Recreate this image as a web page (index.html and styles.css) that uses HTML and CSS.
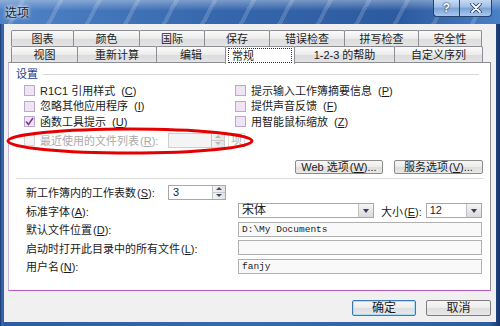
FILE: index.html
```html
<!DOCTYPE html>
<html lang="zh-CN">
<head>
    <meta charset="UTF-8">
    <title>选项</title>
    <link rel="stylesheet" href="styles.css">
</head>
<body>
    <div class="window">
        <div class="titlebar">
            <span class="title">选项</span>
            <div class="caption-buttons">
                <span class="cap-btn help">?</span>
                <span class="cap-btn close">
                    <svg width="12" height="10" viewBox="0 0 12 10"><path d="M2 1 L10 9 M10 1 L2 9" stroke="#1d3558" stroke-width="3.4" stroke-linecap="round"/><path d="M2 1 L10 9 M10 1 L2 9" stroke="#fff" stroke-width="1.8" stroke-linecap="round"/></svg>
                </span>
            </div>
        </div>

        <div class="client">
            <div class="tabs">
                <div class="tab-row back">
                    <div class="tab w63">图表</div>
                    <div class="tab w67">颜色</div>
                    <div class="tab w66">国际</div>
                    <div class="tab w66">保存</div>
                    <div class="tab w76">错误检查</div>
                    <div class="tab w75">拼写检查</div>
                    <div class="tab w64">安全性</div>
                </div>
                <div class="tab-row front">
                    <div class="tab w67">视图</div>
                    <div class="tab w80">重新计算</div>
                    <div class="tab w70">编辑</div>
                    <div class="tab w70 selected"><span class="focus">常规</span></div>
                    <div class="tab w101">1-2-3 的帮助</div>
                    <div class="tab w89">自定义序列</div>
                </div>
            </div>

            <div class="panel">
                <div class="group-title"><span>设置</span><div class="rule"></div></div>

                <div class="options">
                    <label class="check"><span class="box"></span>R1C1 引用样式<span class="key">(<u>C</u>)</span></label>
                    <label class="check"><span class="box"></span>提示输入工作簿摘要信息<span class="key">(<u>P</u>)</span></label>
                    <label class="check"><span class="box"></span>忽略其他应用程序<span class="key">(<u>I</u>)</span></label>
                    <label class="check"><span class="box"></span>提供声音反馈<span class="key">(<u>F</u>)</span></label>
                    <label class="check"><span class="box checked">
                        <svg width="9" height="9" viewBox="0 0 9 9"><path d="M1 4.5 L3.5 7.5 L8 1" fill="none" stroke="#7a3a9a" stroke-width="1.6"/></svg>
                    </span>函数工具提示<span class="key">(<u>U</u>)</span></label>
                    <label class="check"><span class="box"></span>用智能鼠标缩放<span class="key">(<u>Z</u>)</span></label>
                </div>

                <div class="recent">
                    <span class="box disabled"></span>
                    <span class="recent-label">最近使用的文件列表<span class="key">(<u>R</u>):</span></span>
                    <div class="spin disabled">
                        <span class="value"></span>
                        <span class="arrows"><i class="up"></i><i class="down"></i></span>
                    </div>
                    <span class="unit">项</span>
                </div>

                <div class="panel-buttons">
                    <button class="btn">Web 选项<span class="key">(<u>W</u>)...</span></button>
                    <button class="btn">服务选项<span class="key">(<u>V</u>)...</span></button>
                </div>

                <div class="separator"></div>

                <div class="form">
                    <div class="form-row">
                        <span class="label short">新工作簿内的工作表数<span class="key">(<u>S</u>):</span></span>
                        <div class="spin">
                            <span class="value">3</span>
                            <span class="arrows"><i class="up"></i><i class="down"></i></span>
                        </div>
                    </div>
                    <div class="form-row">
                        <span class="label">标准字体<span class="key">(<u>A</u>):</span></span>
                        <div class="combo font">
                            <span class="value">宋体</span>
                            <span class="drop"></span>
                        </div>
                        <span class="size-label">大小<span class="key">(<u>E</u>):</span></span>
                        <div class="combo size">
                            <span class="value latin">12</span>
                            <span class="drop"></span>
                        </div>
                    </div>
                    <div class="form-row">
                        <span class="label">默认文件位置<span class="key">(<u>D</u>):</span></span>
                        <div class="input mono">D:\My Documents</div>
                    </div>
                    <div class="form-row">
                        <span class="label">启动时打开此目录中的所有文件<span class="key">(<u>L</u>):</span></span>
                        <div class="input mono"></div>
                    </div>
                    <div class="form-row">
                        <span class="label">用户名<span class="key">(<u>N</u>):</span></span>
                        <div class="input mono">fanjy</div>
                    </div>
                </div>

                <svg class="highlight" width="252" height="29" viewBox="0 0 252 29">
                    <ellipse cx="125" cy="14" rx="122" ry="12" fill="none" stroke="#e40000" stroke-width="3"/>
                </svg>
            </div>

            <div class="footer">
                <button class="btn big default">确定</button>
                <button class="btn big">取消</button>
            </div>
        </div>
    </div>
</body>
</html>
```

FILE: styles.css
```css
* {
    box-sizing: border-box;
}
body {
    margin: 0;
    width: 500px;
    height: 326px;
    overflow: hidden;
    font-family: "Liberation Sans", "Noto Sans CJK SC", sans-serif;
    font-size: 11px;
    color: #1b1b1b;
}
u {
    text-decoration: underline;
    text-underline-offset: 1px;
}
.key {
    font-family: "Liberation Sans", sans-serif;
    margin-left: 1px;
}

/* window frame */
.window {
    width: 500px;
    height: 326px;
    display: flex;
    flex-direction: column;
    background: linear-gradient(90deg, #17356a 0, #3a6bb0 2px, #2f5c9f 4px, #3a68ac 50%, #2f5c9f 98%, #17356a 100%);
}
.titlebar {
    height: 24px;
    flex: none;
    display: flex;
    justify-content: space-between;
    align-items: flex-start;
    padding-left: 5px;
    background:
        linear-gradient(rgba(255,255,255,0.35), rgba(255,255,255,0) 45%),
        repeating-linear-gradient(118deg, rgba(255,255,255,0) 0 18px, rgba(255,255,255,0.16) 18px 22px, rgba(255,255,255,0) 22px 34px),
        linear-gradient(90deg, #4f82c6, #3566ad 45%, #2c5aa0 80%, #4a80c6);
}
.title {
    font-size: 12px;
    line-height: 26px;
    color: #0f1e38;
    text-shadow: 0 0 3px #fff, 0 0 5px #fff;
}
.caption-buttons {
    display: flex;
    margin-right: 8px;
}
.cap-btn {
    height: 17px;
    display: flex;
    align-items: center;
    justify-content: center;
    border: 1px solid #24446f;
    border-top: none;
    background: linear-gradient(#c7dbf2, #9dbde4 45%, #7aa2d6 50%, #a9c8ec);
    color: #fff;
    font-weight: bold;
    font-size: 12px;
    text-shadow: 0 0 2px #1d3558, 0 0 1px #1d3558;
}
.cap-btn.help {
    width: 26px;
    border-right: none;
    border-radius: 0 0 0 4px;
}
.cap-btn.close {
    width: 33px;
    border-radius: 0 0 4px 0;
}

/* dialog client area */
.client {
    flex: 1;
    margin: 0 4px 4px;
    padding: 5px 5px 0 4px;
    background: #f0f0f0;
    display: flex;
    flex-direction: column;
}
.tabs {
    margin: 0 3px;
}
.tab-row {
    display: flex;
    height: 17px;
}
.tab {
    flex: none;
    display: flex;
    align-items: center;
    justify-content: center;
    height: 17px;
    border: 1px solid #8c8e94;
    border-bottom: none;
    border-radius: 2px 2px 0 0;
    margin-right: -1px;
    background: linear-gradient(#fbfbfb, #ebebeb 50%, #dcdcdc 51%, #e4e4e4);
    line-height: 14px;
}
.tab-row.back .tab {
    height: 16px;
}
.tab-row.back {
    align-items: flex-end;
}
.tab.selected {
    position: relative;
    z-index: 1;
    height: 18px;
    background: #fff;
    padding: 1px 2px 1px;
}
.tab .focus {
    flex: 1;
    align-self: stretch;
    display: flex;
    align-items: center;
    justify-content: flex-start;
    padding-left: 3px;
    border: 1px dotted #333;
}
.w63 { width: 63px; }
.w64 { width: 64px; }
.w66 { width: 66px; }
.w67 { width: 67px; }
.w70 { width: 70px; }
.w75 { width: 75px; }
.w76 { width: 76px; }
.w80 { width: 80px; }
.w89 { width: 89px; }
.w101 { width: 101px; }

/* tab page */
.panel {
    position: relative;
    flex: none;
    height: 229px;
    margin-top: -1px;
    background: #fff;
    border: 1px solid #8c8e94;
    border-left-color: #c8b6d4;
    border-bottom: 1px solid #b45ac2;
    padding: 0 7px 0 7px;
}
.group-title {
    display: flex;
    align-items: center;
    margin-top: 4px;
    height: 14px;
    line-height: 14px;
    color: #1f3b8a;
}
.group-title .rule {
    flex: 1;
    height: 1px;
    margin: 0 4px 0 5px;
    background: #d8d8d8;
}
.options {
    display: grid;
    grid-template-columns: 211px 1fr;
    grid-auto-rows: 15.5px;
    margin: 2px 0 0 8px;
}
.check {
    display: flex;
    align-items: center;
    gap: 5px;
    line-height: 14px;
}
.box {
    flex: none;
    width: 11px;
    height: 11px;
    display: flex;
    align-items: center;
    justify-content: center;
    border: 1px solid #bba9c9;
    background: #efe3f4;
}
.box.disabled {
    border-color: #d2d2d2;
    background: #f3f3f3;
}
.recent {
    display: flex;
    align-items: center;
    height: 15px;
    margin: 3px 0 0 8px;
    color: #a9a9a9;
}
.recent-label {
    margin-left: 5px;
    width: 128px;
}
.spin {
    display: flex;
    width: 58px;
    height: 15px;
    border: 1px solid #a8a8a8;
    background: #fff;
}
.spin.disabled {
    width: 57px;
    border-color: #cfcfcf;
    background: #f4f4f4;
}
.spin .value {
    flex: 1;
    padding-left: 4px;
    line-height: 13px;
}
.spin .arrows {
    width: 13px;
    display: flex;
    flex-direction: column;
    border-left: 1px solid #c4c4c4;
    background: linear-gradient(90deg, #f4f4f4, #e2e2e2);
}
.spin .arrows i {
    flex: 1;
    display: flex;
    align-items: center;
    justify-content: center;
}
.spin .arrows i.up {
    border-bottom: 1px solid #c9c9c9;
}
.spin .arrows i::after {
    content: "";
    border-left: 3px solid transparent;
    border-right: 3px solid transparent;
}
.spin .arrows i.up::after {
    border-bottom: 3px solid #3d4f6e;
}
.spin .arrows i.down::after {
    border-top: 3px solid #3d4f6e;
}
.spin.disabled .arrows i.up::after {
    border-bottom-color: #b8b8b8;
}
.spin.disabled .arrows i.down::after {
    border-top-color: #b8b8b8;
}
.recent .unit {
    margin-left: 3px;
    padding: 0 2px;
    border: 1px solid #dedede;
    line-height: 12px;
}
.panel-buttons {
    display: flex;
    justify-content: flex-end;
    gap: 11px;
    margin-top: 12px;
}
.btn {
    height: 14px;
    padding: 0;
    border: 1px solid #8b8b8b;
    border-radius: 2px;
    background: linear-gradient(#f7f7f7, #ececec 50%, #dedede 51%, #e8e8e8);
    font-family: "Liberation Sans", "Noto Sans CJK SC", sans-serif;
    font-size: 11px;
    line-height: 12px;
    color: #1b1b1b;
}
.panel-buttons .btn:first-child {
    width: 88px;
}
.panel-buttons .btn:last-child {
    width: 89px;
}
.separator {
    height: 1px;
    margin: 4px 0 0 0;
    background: #dcdcdc;
}
.form {
    display: flex;
    flex-direction: column;
    gap: 3.5px;
    margin: 6px 1px 0 10px;
}
.form-row {
    display: flex;
    align-items: center;
    height: 15px;
}
.label {
    flex: none;
    width: 212px;
}
.label.short {
    width: 142px;
}
.combo {
    display: flex;
    height: 15px;
    border: 1px solid #a8a8a8;
    background: #fff;
}
.combo.font {
    width: 136px;
}
.combo.size {
    flex: 1;
}
.combo .value {
    flex: 1;
    padding-left: 3px;
    line-height: 13px;
    font-size: 12px;
}
.combo .value.latin {
    font-size: 11px;
}
.combo .drop {
    width: 15px;
    display: flex;
    align-items: center;
    justify-content: center;
    background: linear-gradient(#f5f5f5, #dadada);
    border-left: 1px solid #c2c2c2;
}
.combo .drop::after {
    content: "";
    border-left: 3.5px solid transparent;
    border-right: 3.5px solid transparent;
    border-top: 4px solid #2e3e5c;
}
.size-label {
    margin: 0 4px 0 7px;
}
.input {
    flex: 1;
    height: 15px;
    border: 1px solid #b0b0b0;
    background: #f9f9f9;
    padding-left: 3px;
    line-height: 13px;
}
.mono {
    font-family: "Liberation Mono", monospace;
    font-size: 9.5px;
}
.highlight {
    position: absolute;
    left: -4px;
    top: 64px;
}

/* bottom buttons */
.footer {
    display: flex;
    justify-content: flex-end;
    gap: 10px;
    padding-top: 9px;
}
.btn.big {
    width: 65px;
    height: 16px;
    border-color: #7d7d7d;
    font-size: 12px;
    line-height: 14px;
}
.btn.default {
    width: 64px;
    border-color: #3d7bad;
    box-shadow: inset 0 0 0 1px #a8dcf6;
}
```
